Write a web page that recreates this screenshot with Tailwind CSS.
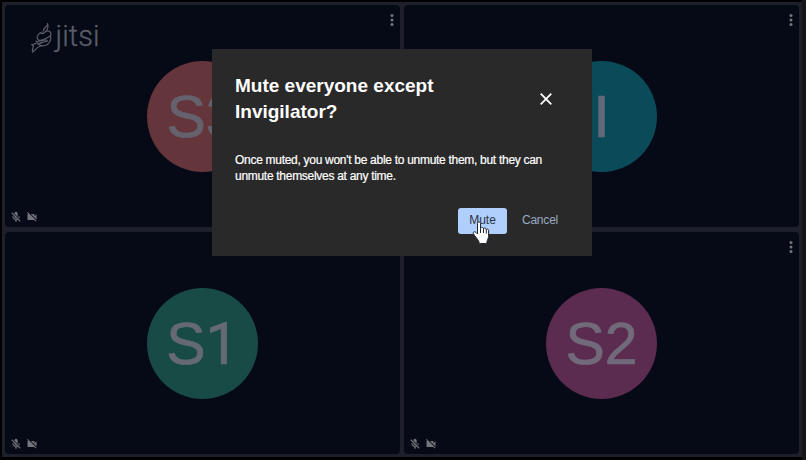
<!DOCTYPE html>
<html lang="en">
<head>
<meta charset="utf-8">
<title>Jitsi Meet</title>
<script src="https://cdn.jsdelivr.net/npm/@tailwindcss/browser@4"></script>
</head>
<body class="w-[806px] h-[460px] overflow-hidden bg-black font-['Liberation_Sans',Arial,sans-serif]">
<svg class="hidden">
  <symbol id="mic-off" viewBox="0 0 24 24"><path fill="currentColor" stroke="currentColor" stroke-width=".6" d="M19 11h-1.700c0 .74-.16 1.430-.43 2.050l1.230 1.230c.56-.98.9-2.090.9-3.280zm-4.020.17c0-.060.020-.110.020-.170V5c0-1.660-1.340-3-3-3S9 3.340 9 5v.18l5.980 5.990zM4.270 3L3 4.270l6.010 6.010V11c0 1.660 1.330 3 2.990 3 .22 0 .44-.030.65-.080l1.660 1.660c-.71.33-1.500.52-2.310.52-2.760 0-5.300-2.100-5.300-5.100H5c0 3.410 2.720 6.230 6 6.720V21h2v-3.280c.91-.13 1.770-.45 2.540-.9L19.730 21 21 19.730 4.270 3z"/></symbol>
  <symbol id="cam-off" viewBox="0 0 24 24"><path fill="currentColor" d="M21 6.500l-4 4V7c0-.55-.45-1-1-1H9.820L21 17.180V6.500zM3.270 2L2 3.270 4.730 6H4c-.55 0-1 .45-1 1v10c0 .55.45 1 1 1h12c.21 0 .39-.080.54-.180L19.730 21 21 19.730 3.270 2z"/></symbol>
  <symbol id="dots" viewBox="0 0 6 14"><g fill="currentColor"><circle cx="3" cy="2.500" r="1.500"/><circle cx="3" cy="7" r="1.500"/><circle cx="3" cy="11.500" r="1.500"/></g></symbol>
</svg>
<div class="relative w-full h-full bg-[#151515] pr-[4px]">
  <div class="h-full bg-black pt-[2px] pl-[2px] pb-[3px]">
    <main class="grid h-full grid-cols-[395px_395px] grid-rows-[222px_222px] gap-x-[4px] gap-y-[5px] bg-[#1d202b] p-[3px] text-[#74767e]">
      <section class="relative flex items-center justify-center rounded bg-[#060a16]">
        <div class="flex size-[111px] items-center justify-center rounded-full bg-[#64353a] pt-[2px] text-[59px] text-[#65626e] [-webkit-text-stroke:0.7px_#65626e]">S3</div>
        <div class="absolute left-[26px] top-[16px] flex text-[#5b5e69]">
          <svg class="h-[34px] w-[23px]" viewBox="0 0 23 34" fill="none" stroke="currentColor" stroke-width="1.200" stroke-linecap="round" stroke-linejoin="round"><path d="M16.500 2.500c1 3-4.500 4-4 7.500M16.500 3c1.500 3-.5 5-1 7.500M11 11c-3 .5-5.500 4-4.500 7 1.500 3 5.500.5 8-.5 3-1 5.500-2 5.500-4.500 0-3-4-4-6-2-1.500 1.500-3 2-4.500 1M19.500 15.500c1 3-1 8-5.500 9-3.500 1-7.500-.5-9-4.500M6 20.500c3 0 6-1.500 9-1.500 1.500 0 2 1.500 0 1.500-3 0-5 2-7 2M10 25c-2 .5-4 1-5.500 3.500L1.500 31c-.5-3 .5-4 1-6L.7 23.500c2-.5 3 0 4-1"/></svg>
          <svg class="h-[42px] w-[52px] overflow-visible" viewBox="0 0 52 42"><text x="1.500" y="25" font-family="Roboto, sans-serif" font-weight="300" font-size="29" textLength="44" fill="currentColor" stroke="currentColor" stroke-width=".3">jitsi</text></svg>
        </div>
        <svg class="absolute right-[5px] top-[8px] h-[14px] w-[6px]"><use href="#dots"/></svg>
        <div class="absolute bottom-[4px] left-[5px] flex gap-[4px]"><svg class="size-[12px]"><use href="#mic-off"/></svg><svg class="size-[12px]"><use href="#cam-off"/></svg></div>
      </section>
      <section class="relative flex items-center justify-center rounded bg-[#060a16]">
        <div class="flex size-[111px] items-center justify-center rounded-full bg-[#0b4a59] pt-[2px] text-[60px] text-[#626779] [-webkit-text-stroke:0.7px_#626779]">I</div>
        <svg class="absolute right-[5px] top-[8px] h-[14px] w-[6px]"><use href="#dots"/></svg>
      </section>
      <section class="relative flex items-center justify-center rounded bg-[#060a16]">
        <div class="flex size-[111px] items-center justify-center rounded-full bg-[#184a46] pt-[2px] text-[59px] text-[#656974] [-webkit-text-stroke:0.7px_#656974]"><span>S</span><span class="font-[Roboto]">1</span></div>
        <div class="absolute bottom-[4px] left-[5px] flex gap-[4px]"><svg class="size-[12px]"><use href="#mic-off"/></svg><svg class="size-[12px]"><use href="#cam-off"/></svg></div>
      </section>
      <section class="relative flex items-center justify-center rounded bg-[#060a16]">
        <div class="flex size-[111px] items-center justify-center rounded-full bg-[#5b2b50] pt-[2px] text-[59px] text-[#716a7b] [-webkit-text-stroke:0.7px_#716a7b]">S2</div>
        <svg class="absolute right-[5px] top-[8px] h-[14px] w-[6px]"><use href="#dots"/></svg>
        <div class="absolute bottom-[4px] left-[5px] flex gap-[4px]"><svg class="size-[12px]"><use href="#mic-off"/></svg><svg class="size-[12px]"><use href="#cam-off"/></svg></div>
      </section>
    </main>
  </div>

  <div role="dialog" class="absolute left-[212px] top-[49px] flex h-[207px] w-[380px] flex-col bg-[#292929] px-[23px] pt-[23px] text-white">
    <header class="flex h-[54px] items-center justify-between pr-[10px]">
      <h1 class="w-[220px] text-[19px] font-bold leading-[26px]"><span class="block whitespace-nowrap">Mute everyone except</span><span class="block">Invigilator?</span></h1>
      <svg class="size-[12px] mr-[7px]" viewBox="0 0 12 12" fill="none" stroke="white" stroke-width="1.800"><path d="M.7.700l10.600 10.600M11.300.7L.7 11.300"/></svg>
    </header>
    <p class="mt-[26px] whitespace-nowrap text-[12px] tracking-[-0.29px] leading-[16px] [-webkit-text-stroke:0.2px_white]">Once muted, you won't be able to unmute them, but they can<br>unmute themselves at any time.</p>
    <footer class="mt-[24px] flex justify-end pr-[4px] text-[12px]">
      <button class="h-[26px] w-[49px] rounded-[3px] bg-[#b0cffc] pb-[2px] text-[#2a3446]">Mute</button>
      <button class="ml-[8px] h-[26px] w-[50px] pb-[2px] tracking-[-0.2px] text-[#99a9c2]">Cancel</button>
    </footer>
  </div>
  <svg class="absolute left-[472px] top-[221px] h-[24px] w-[18px]" viewBox="0 0 18 24"><path fill="white" stroke="#20242c" stroke-width="1" stroke-linejoin="round" d="M5.500 2.500C5.500.5 8.500.5 8.500 2.500v5c0-1.500 3-1.500 3 .5 0-1.500 2.800-1.300 2.800.8 0-1.200 2.300-1 2.300.7v6c0 2-1.600 3.500-1.600 5.500 0 1-.5 1.500-1.500 1.500H8.500c-1 0-1.500-.5-1.500-1.500 0-1.500-4-5.500-5.500-8C.5 11 2.500 10 4 11.500l1.500 1.500zM8.500 7.500v4.500M11.500 8v4M14.300 9v3.500"/></svg>
</div>
</body>
</html>
